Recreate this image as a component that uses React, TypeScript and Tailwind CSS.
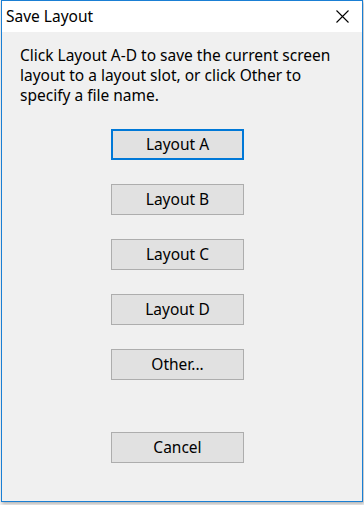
const buttons = ["Layout A", "Layout B", "Layout C", "Layout D", "Other..."];

const font = { fontFamily: '"Noto Sans", "Open Sans", sans-serif' };

const App = () => {
  return (
    <div className="w-[364px] h-[505px] bg-[#f3f3f3] overflow-hidden" style={font}>
      <div className="ml-[1px] w-[362px] h-[502px] border border-[#1a7fd4] bg-[#f0f0f0] flex flex-col shadow-[1px_2px_3px_rgba(0,0,0,0.25)]">
        {/* Title bar */}
        <div className="h-[31px] bg-white flex items-center justify-between pl-[4px] pr-[13px] shrink-0">
          <span className="text-[15.5px] text-black leading-none">Save Layout</span>
          <svg width="13" height="13" viewBox="0 0 13 13" className="text-black">
            <path d="M0.5 0.5 L12.5 12.5 M12.5 0.5 L0.5 12.5" stroke="currentColor" strokeWidth="1.1" />
          </svg>
        </div>

        {/* Body */}
        <div className="flex-1 flex flex-col pt-[13px]">
          <p className="pl-[18px] pr-[20px] text-[15.5px] leading-[20px] text-black">
            Click Layout A-D to save the current screen layout to a layout slot, or click Other to specify a file name.
          </p>

          <div className="mt-[24px] ml-[109px] flex flex-col gap-[24px]">
            {buttons.map((label, i) => (
              <button
                key={label}
                className={`w-[133px] h-[31px] bg-[#e1e1e1] text-[15.5px] text-black flex items-center justify-center ${
                  i === 0 ? "border-2 border-[#0078d7]" : "border border-[#adadad]"
                }`}
              >
                {label}
              </button>
            ))}
            <button className="mt-[28px] w-[133px] h-[31px] bg-[#e1e1e1] border border-[#adadad] text-[15.5px] text-black flex items-center justify-center">
              Cancel
            </button>
          </div>
        </div>
      </div>
    </div>
  );
};

export default App;
